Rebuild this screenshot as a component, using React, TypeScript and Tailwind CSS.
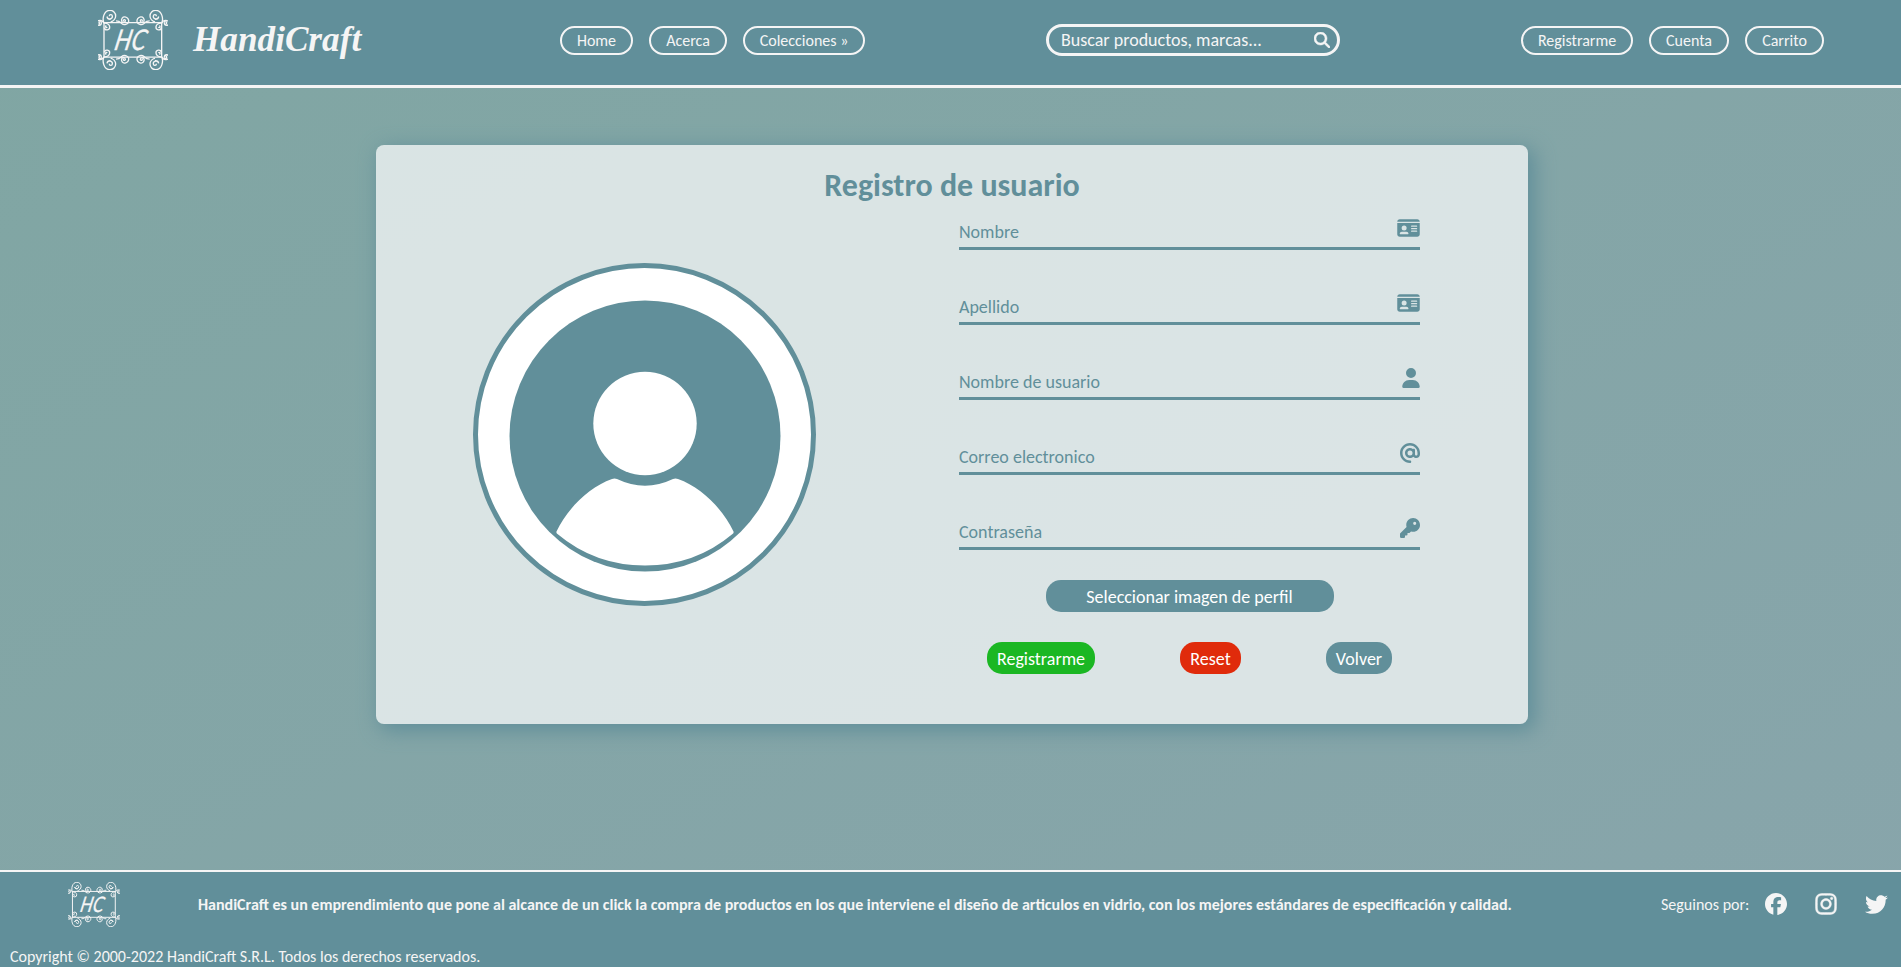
import type { ReactNode } from "react";
import {
  FaAt,
  FaFacebook,
  FaIdCard,
  FaInstagram,
  FaKey,
  FaMagnifyingGlass,
  FaTwitter,
  FaUser,
} from "react-icons/fa6";

function Flourish() {
  return (
    <g>
      <path d="M46 30a4.500 4.500 0 0 1 9 -1a8 8 0 0 1 -16 2M39 31a10 10 0 0 0 11 8M30 50C24 38 29 12 48 12a17 17 0 0 1 17 17c0 9-8 16-15 18" />
      <path d="M22 50a3.500 3.500 0 1 0 -4 3M22 50a7 7 0 1 1 -8 -7c8-2 14 4 16 8" />
      <path d="M37 58a3 3 0 1 0 3 5M30 51c8-1 17 3 17 11a8 8 0 0 1 -16 2" />
      <path d="M89 45a3 3 0 1 1 5 -1a6 6 0 0 1 -11 1c-2-7 3-14 10-13c8 1 12 8 11 14c-2 9-14 12-21 6c-4-4-5-8-17-8" />
    </g>
  );
}

function Logo({ className }: { className: string }) {
  return (
    <svg viewBox="12 11 210 181" preserveAspectRatio="none" className={className} fill="none" stroke="#f5f5f5" strokeWidth="4">
      <path d="M30 49H203V153H30Z" />
      <Flourish />
      <g transform="translate(233 0) scale(-1 1)"><Flourish /></g>
      <g transform="translate(0 203) scale(1 -1)"><Flourish /></g>
      <g transform="translate(233 203) scale(-1 -1)"><Flourish /></g>
      <text
        x="64"
        y="132"
        transform="translate(22 0) skewX(-12)"
        textLength="94"
        lengthAdjust="spacingAndGlyphs"
        className="font-['Lato',sans-serif] text-[86px] italic"
        fill="#f5f5f5"
        strokeWidth="1"
      >
        HC
      </text>
    </svg>
  );
}

function Pill({ children, width }: { children: ReactNode; width: string }) {
  return (
    <a className={`${width} flex h-[29px] items-center justify-center rounded-full border-2 border-[#f5f5f5] text-base leading-none whitespace-nowrap`}>
      {children}
    </a>
  );
}

function Field({ label, icon }: { label: string; icon: ReactNode }) {
  return (
    <div className="flex h-[45px] justify-between border-b-[3px] border-[#618f9a]">
      <span className="pt-4 text-lg leading-[22px]">{label}</span>
      <span className="pt-[13px] text-xl">{icon}</span>
    </div>
  );
}

export default function App() {
  return (
    <div className="flex h-[967px] w-full flex-col bg-[linear-gradient(to_bottom_right,#80a6a3,#88a5ab)] font-['Carlito','Calibri','Lato',sans-serif] text-[#f5f5f5]">
      <header className="flex h-[88px] shrink-0 border-b-[3px] border-[#f5f5f5] bg-[#618f9a] pl-[98px]">
        <Logo className="mt-[10px] h-[60px] w-[70px] shrink-0" />
        <h1 className="mt-[19px] ml-[25px] w-[367px] shrink-0 font-['Liberation_Serif',serif] text-[35.2px] leading-[42px] font-bold italic">
          HandiCraft
        </h1>
        <nav className="mt-[26px] flex w-[486px] shrink-0 gap-4">
          <Pill width="w-[73px]">Home</Pill>
          <Pill width="w-[78px]">Acerca</Pill>
          <Pill width="w-[122px]">Colecciones »</Pill>
        </nav>
        <div className="mt-6 flex h-8 w-[294px] shrink-0 items-center justify-between rounded-full border-[3px] border-[#f5f5f5] pr-[7px] pl-3">
          <span className="text-lg leading-none">Buscar productos, marcas...</span>
          <FaMagnifyingGlass className="size-4" stroke="#f5f5f5" strokeWidth="16" />
        </div>
        <nav className="mt-[26px] ml-[181px] flex gap-4">
          <Pill width="w-28">Registrarme</Pill>
          <Pill width="w-20">Cuenta</Pill>
          <Pill width="w-[79px]">Carrito</Pill>
        </nav>
      </header>

      <main className="flex flex-1 justify-center pt-[57px]">
        <section className="mr-[-3px] flex h-[579px] w-[1152px] flex-col rounded-lg bg-white/70 text-[#618f9a] shadow-[5px_5px_20px_2px_#618f9a]">
          <h2 className="h-[60px] pt-[21px] text-center text-[32px] leading-10 font-bold">Registro de usuario</h2>
          <div className="flex pl-[97px]">
            <div className="mt-[58px] size-[343px] shrink-0 rounded-full border-[5px] border-[#618f9a] bg-white">
              <svg viewBox="478 268 333 333" className="size-full">
                <circle cx="645" cy="436" r="135.500" fill="#618f9a" />
                <circle cx="645" cy="423.500" r="51.700" fill="#fff" />
                <path
                  fill="#fff"
                  d="M556.500 531.500C568 508 589 487 612 479Q614.500 478 617 479Q631 485.700 645 485.700T673 479Q675.500 478 678 479C701 487 722 508 733.500 531.500Q734 533 732.500 534Q695 565.500 645 565.500T557.500 534Q556 533 556.500 531.500Z"
                />
              </svg>
            </div>
            <form className="ml-[143px] w-[461px]">
              <div className="flex flex-col gap-[30px]">
                <Field label="Nombre" icon={<FaIdCard className="w-[23px]" />} />
                <Field label="Apellido" icon={<FaIdCard className="w-[23px]" />} />
                <Field label="Nombre de usuario" icon={<FaUser className="w-[18px]" />} />
                <Field label="Correo electronico" icon={<FaAt />} />
                <Field label="Contraseña" icon={<FaKey />} />
              </div>
              <button type="button" className="mx-auto mt-[30px] block h-8 w-72 rounded-[15px] bg-[#618f9a] pt-px text-lg leading-8 text-white">
                Seleccionar imagen de perfil
              </button>
              <div className="mt-[30px] flex justify-between px-7 text-lg leading-8 text-white">
                <button type="button" className="h-8 w-[108px] rounded-[15px] bg-[#1bb723] pt-px">Registrarme</button>
                <button type="button" className="h-8 w-[61px] rounded-[15px] bg-[#e02b0b] pt-px">Reset</button>
                <button type="button" className="h-8 w-[66px] rounded-[15px] bg-[#618f9a] pt-px">Volver</button>
              </div>
            </form>
          </div>
        </section>
      </main>

      <footer className="shrink-0 grow-0 basis-[97px] border-t-2 border-[#f5f5f5] bg-[#618f9a]">
        <div className="flex h-[75px] pl-[68px]">
          <Logo className="mt-[10px] h-[45px] w-[52px] shrink-0" />
          <p className="mt-[23px] ml-[78px] w-[1463px] shrink-0 text-base leading-5 font-bold whitespace-nowrap">
            HandiCraft es un emprendimiento que pone al alcance de un click la compra de productos en los que interviene el
            diseño de articulos en vidrio, con los mejores estándares de especificación y calidad.
          </p>
          <span className="mt-[23px] w-26 shrink-0 text-base leading-5 whitespace-nowrap">Seguinos por:</span>
          <div className="mt-[21px] flex text-[22px]">
            <FaFacebook />
            <FaInstagram className="-mt-px ml-[27px] size-6" stroke="#f5f5f5" strokeWidth="10" />
            <FaTwitter className="ml-[27px] size-[23px]" />
          </div>
        </div>
        <p className="h-5 pl-[10px] text-base leading-5">Copyright © 2000-2022 HandiCraft S.R.L. Todos los derechos reservados.</p>
      </footer>
    </div>
  );
}
